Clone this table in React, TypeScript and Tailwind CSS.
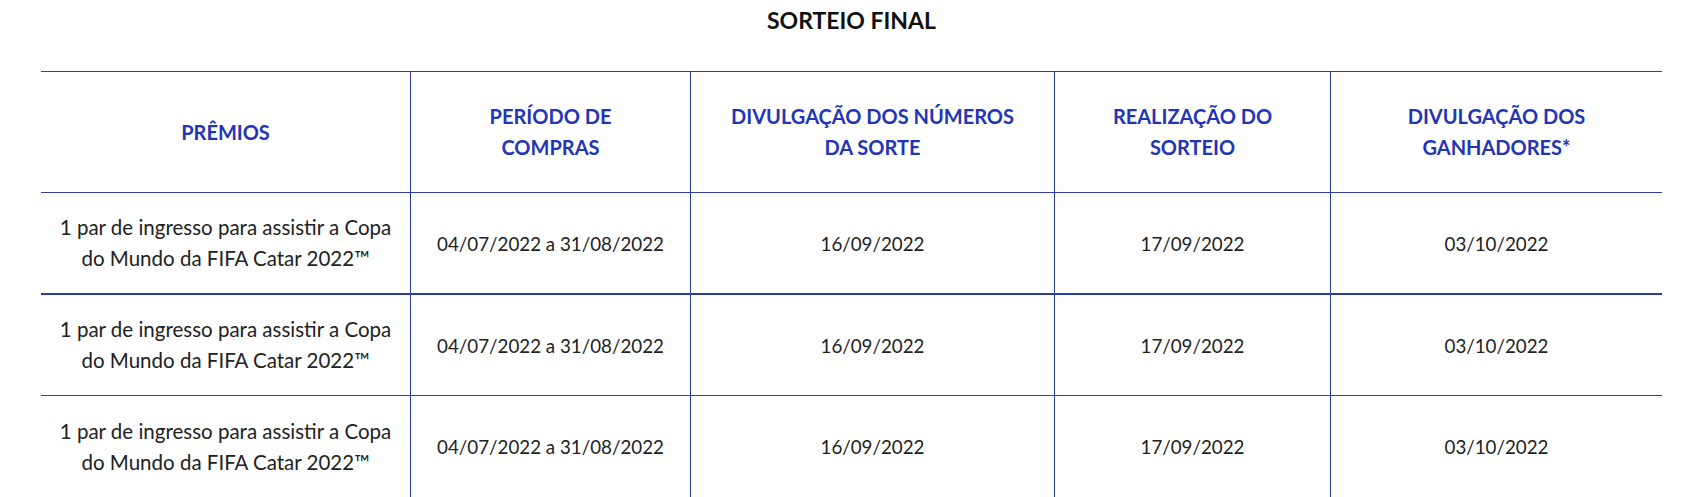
import React from 'react';

const rows = [
  { premio: ['1 par de ingresso para assistir a Copa', 'do Mundo da FIFA Catar 2022™'], compras: '04/07/2022 a 31/08/2022', numeros: '16/09/2022', sorteio: '17/09/2022', ganhadores: '03/10/2022' },
  { premio: ['1 par de ingresso para assistir a Copa', 'do Mundo da FIFA Catar 2022™'], compras: '04/07/2022 a 31/08/2022', numeros: '16/09/2022', sorteio: '17/09/2022', ganhadores: '03/10/2022' },
  { premio: ['1 par de ingresso para assistir a Copa', 'do Mundo da FIFA Catar 2022™'], compras: '04/07/2022 a 31/08/2022', numeros: '16/09/2022', sorteio: '17/09/2022', ganhadores: '03/10/2022' },
];

const headers = [
  ['PRÊMIOS'],
  ['PERÍODO DE', 'COMPRAS'],
  ['DIVULGAÇÃO DOS NÚMEROS', 'DA SORTE'],
  ['REALIZAÇÃO DO', 'SORTEIO'],
  ['DIVULGAÇÃO DOS', 'GANHADORES*'],
];

const grid = 'grid grid-cols-[370px_280px_364px_276px_331px]';
const cell = 'flex flex-col items-center justify-center text-center border-r border-[#2d3caa]';

const App = () => {
  return (
    <div className="w-[1692px] h-[497px] overflow-hidden bg-white pl-[41px] font-['Lato','Noto_Sans',sans-serif]">
      {/* Título */}
      <div className="w-[1621px] pt-2 mb-[39px] text-center text-[23px] leading-6 font-bold text-[#111]">
        SORTEIO FINAL
      </div>

      {/* Tabela */}
      <div className="w-[1621px] border-t border-[#2d3caa]">
        <div className={`${grid} h-[121px] border-b border-[#2d3caa]`}>
          {headers.map((h, i) => (
            <div
              key={i}
              className={`${cell} ${i === 4 ? 'border-r-0' : ''} text-[20px] leading-[31px] font-bold text-[#2235b6]`}
            >
              {h.map((line) => (
                <span key={line}>{line}</span>
              ))}
            </div>
          ))}
        </div>

        {rows.map((r, idx) => (
          <div
            key={idx}
            className={`${grid} ${idx === 0 ? 'h-[102px] border-b-2' : idx === 1 ? 'h-[101px] border-b' : 'h-[101px]'} border-[#2d3caa] text-[18.75px] leading-[31px] text-[#222]`}
          >
            <div className={`${cell} text-[20.5px]`}>
              {r.premio.map((line) => (
                <span key={line}>{line}</span>
              ))}
            </div>
            <div className={cell}>{r.compras}</div>
            <div className={cell}>{r.numeros}</div>
            <div className={cell}>{r.sorteio}</div>
            <div className={`${cell} border-r-0`}>{r.ganhadores}</div>
          </div>
        ))}
      </div>
    </div>
  );
};

export default App;
